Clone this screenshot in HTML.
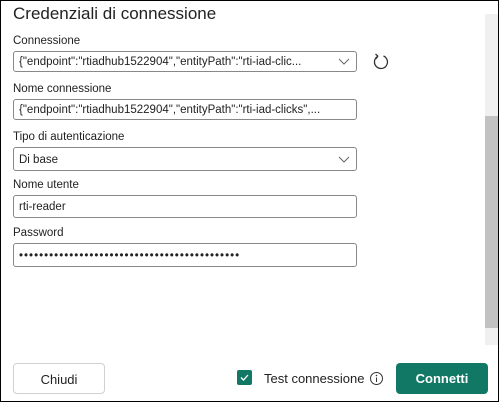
<html><head><style>
body{margin:0;width:499px;height:402px;overflow:hidden;font-family:"Liberation Sans",sans-serif;background:#fff}
.frame{position:absolute;left:0;top:0;width:497px;height:400px;border:1px solid #000;background:#fff}
.t{position:absolute;left:12px;top:3px;font-size:17px;color:#222}
.l{position:absolute;left:12px;font-size:11.5px;color:#222}
.i{position:absolute;left:12px;width:344px;height:21px;border:1px solid #888;border-radius:3px;font-size:11.5px;line-height:21px;padding-left:5px;box-sizing:border-box;color:#222;white-space:nowrap;overflow:hidden}
.chev{position:absolute;right:6px;top:4px}
.sb{position:absolute;left:484px;top:13px;width:13px;height:331px;background:#f0f0f0}
.th{position:absolute;left:484px;top:115px;width:13px;height:212px;background:#c2c2c2}
.btn{position:absolute;top:362px;height:31px;border-radius:4px;font-size:13px;text-align:center;line-height:31px;box-sizing:border-box}
</style></head><body><div class="frame">
<div class="t">Credenziali di connessione</div>
<div class="l" style="top:34px">Connessione</div>
<div class="i" style="top:50px">{"endpoint":"rtiadhub1522904","entityPath":"rti-iad-clic...<svg class="chev" width="12" height="10"><path d="M1 3l5 5 5-5" fill="none" stroke="#666" stroke-width="1"/></svg></div>
<svg style="position:absolute;left:370px;top:51px" width="20" height="20"><path d="M7 4.2A6.5 6.5 0 1 0 12.5 4" fill="none" stroke="#333" stroke-width="1.3"/><path d="M7 4.2L4.5 2M7 4.2L4.8 6.8" fill="none" stroke="#333" stroke-width="1.3"/></svg>
<div class="l" style="top:82px">Nome connessione</div>
<div class="i" style="top:98px">{"endpoint":"rtiadhub1522904","entityPath":"rti-iad-clicks",...</div>
<div class="l" style="top:130px">Tipo di autenticazione</div>
<div class="i" style="top:146px;height:24px;line-height:24px">Di base<svg class="chev" style="top:6px" width="12" height="10"><path d="M1 3l5 5 5-5" fill="none" stroke="#666" stroke-width="1"/></svg></div>
<div class="l" style="top:178px">Nome utente</div>
<div class="i" style="top:194px;height:23px;line-height:23px">rti-reader</div>
<div class="l" style="top:226px">Password</div>
<div class="i" style="top:242px;height:24px;line-height:24px;letter-spacing:1.0px">••••••••••••••••••••••••••••••••••••••••••••</div>
<div class="sb"></div><div class="th"></div>
<div class="btn" style="left:12px;width:92px;border:1px solid #d0d0d0;color:#222">Chiudi</div>
<div style="position:absolute;left:236px;top:369px;width:15px;height:15px;background:#117865;border-radius:2px"><svg width="15" height="15"><path d="M4 7.5l2.5 2.5 4.5-5" fill="none" stroke="#fff" stroke-width="1.3"/></svg></div>
<div style="position:absolute;left:263px;top:370px;font-size:13px;color:#222">Test connessione</div>
<svg style="position:absolute;left:368px;top:370px" width="15" height="15"><circle cx="7.5" cy="7.5" r="6" fill="none" stroke="#333"/><path d="M7.5 6.5v4.5" stroke="#333"/><circle cx="7.5" cy="4.5" r=".8" fill="#333"/></svg>
<div class="btn" style="left:395px;width:92px;background:#117865;color:#fff;font-weight:bold">Connetti</div>
</div></body></html>
